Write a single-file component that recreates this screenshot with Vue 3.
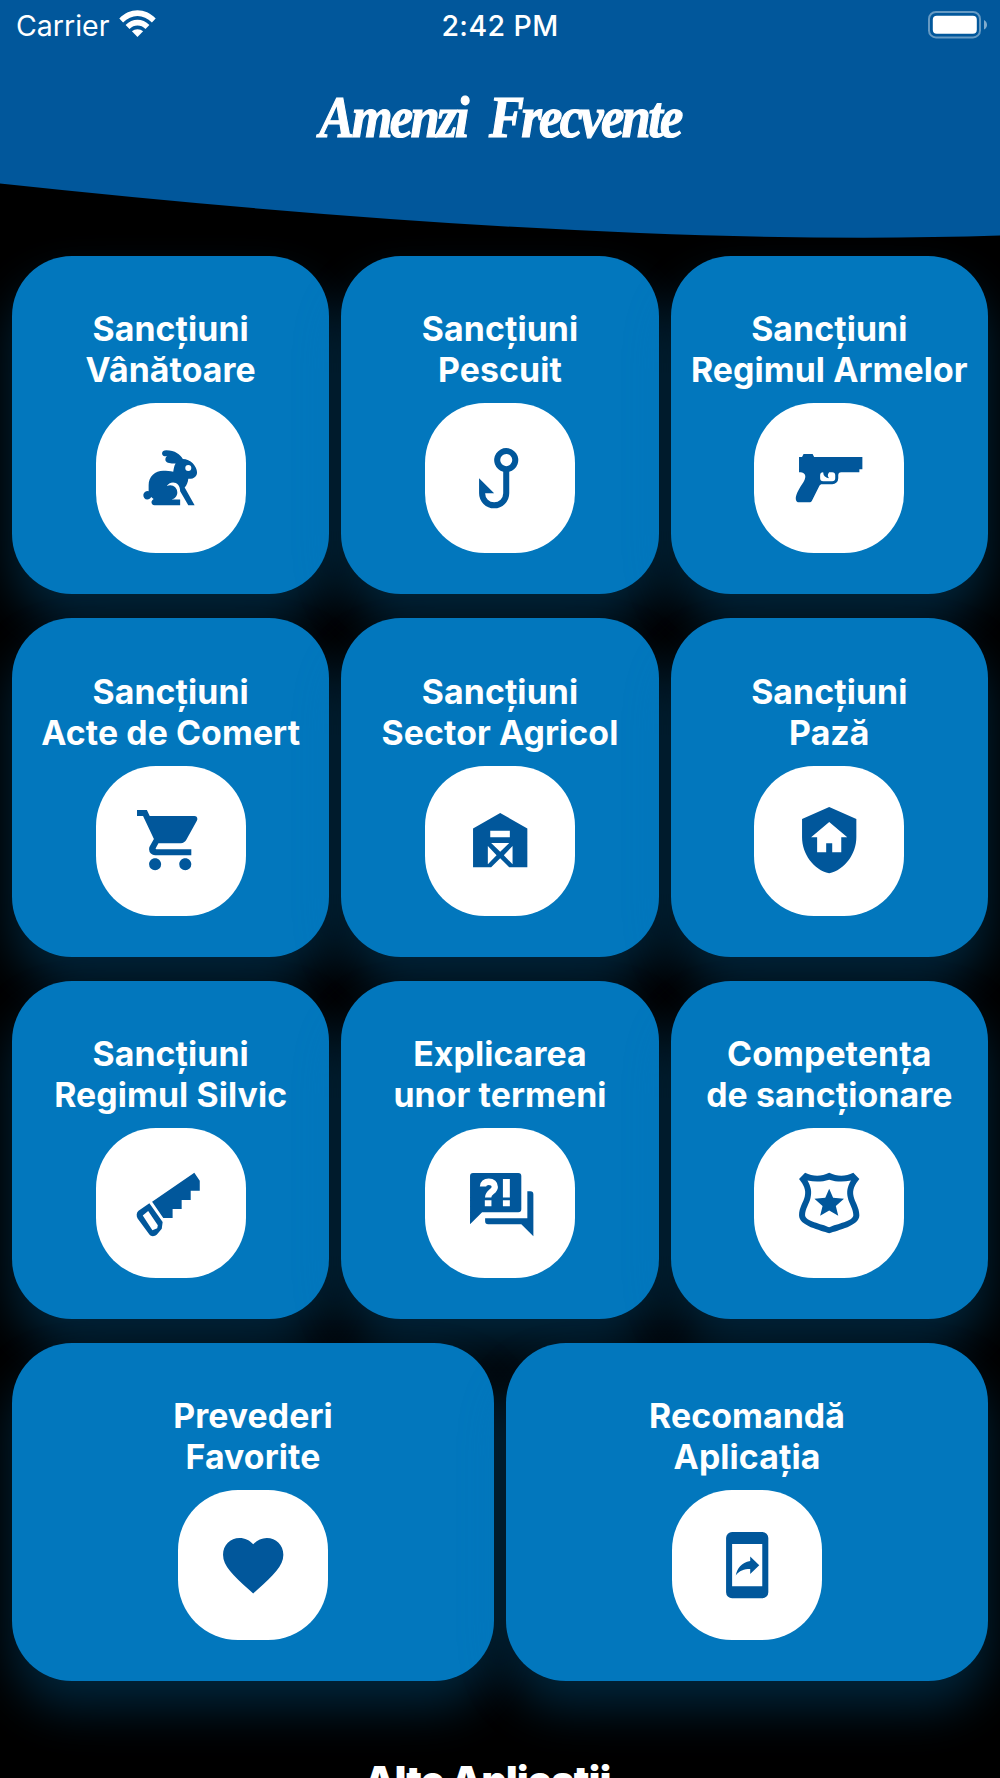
<script setup>
import { ref } from "vue";

const title = ref(["Amenzi", "Frecvente"]);

const icons = {
  rabbit:
    "M18 21L15.3 16.3C15.3 14.5 14.25 13.42 12.95 13.42C12.05 13.42 11.27 13.92 10.87 14.66C11.2 14.47 11.59 14.37 12 14.37C13.3 14.37 14.36 15.43 14.36 16.73C14.36 18.04 13.31 19.1 12 19.1H15.3V21H6.8C6.1 21 5.8 20.5 5.8 20C5.8 19.5 6.1 19.2 6.5 18.9C6.2 18.75 5.95 18.5 5.7 18.25C5.45 18.75 5 19.05 4.4 19.05A1.4 1.4 0 1 1 4.85 16.3V14.3C4.85 11.5 7 9.55 9.7 9.55C10.8 9.55 12 9.7 13 9.85C13.2 9 13.2 8 13.8 7.1C12.6 7.3 10.4 7 10.4 5.9C10.4 5.3 10.6 4.9 11 4.7C10.1 4.8 9.3 4.6 9.3 3.8C9.3 3 9.9 2.75 10.7 2.75C13.6 2.75 15.3 4.2 16.2 5.6C18.7 5.6 20.9 8 20.9 10C20.9 11.4 19.9 12.3 18 12.2C17.9 13.2 17.5 14.5 16.8 15.1L20.1 21H18M18 7.6A1 1 0 1 0 18 9.6A1 1 0 1 0 18 7.6Z",
  hook: "M5 12V17A5 5 0 0 0 15 17V9.87A4 4 0 1 0 13 9.87V17A3 3 0 0 1 7 17H10L5 12M14 4A2 2 0 1 1 12 6A2 2 0 0 1 14 4Z",
  pistol:
    "M7,5H23V9H22V10H16A1,1 0 0,0 15,11V12A2,2 0 0,1 13,14H9.62C9.24,14 8.89,14.22 8.72,14.56L6.27,19.45C6.1,19.79 5.76,20 5.38,20H2C2,20 -1,20 3,14C3,14 6,10 2,10V5H3L3.5,4H6.5L7,5M14,12V11A1,1 0 0,0 13,10H12C12,10 11,11 12,12A2,2 0 0,1 10,10A1,1 0 0,0 9,11V12A1,1 0 0,0 10,13H13A1,1 0 0,0 14,12Z",
  cart: "M17,18C15.89,18 15,18.89 15,20A2,2 0 0,0 17,22A2,2 0 0,0 19,20C19,18.89 18.1,18 17,18M1,2V4H3L6.6,11.59L5.24,14.04C5.09,14.32 5,14.65 5,15A2,2 0 0,0 7,17H19V15H7.42A0.25,0.25 0 0,1 7.17,14.75C7.17,14.7 7.18,14.66 7.2,14.63L8.1,13H15.55C16.3,13 16.96,12.58 17.3,11.97L20.88,5.5C20.95,5.34 21,5.17 21,5A1,1 0 0,0 20,4H5.21L4.27,2M7,18C5.89,18 5,18.89 5,20A2,2 0 0,0 7,22A2,2 0 0,0 9,20C9,18.89 8.1,18 7,18Z",
  barn: "M12 3L3 8.1V21H9L12 18L15 21H21V8.1L12 3M8.7 8.9H15.2V11H8.7V8.9M9 12.9H15L12 15.8L9 12.9M7.9 13.9L10.8 17L7.9 20V13.9M16.1 13.9V20L13.2 17L16.1 13.9Z",
  shieldHome:
    "M11,13H13V16H16V11H18L12,6L6,11H8V16H11V13M12,1L21,5V11C21,16.55 17.16,21.74 12,23C6.84,21.74 3,16.55 3,11V5L12,1Z",
  saw: "M20 1.9L21.8 4.6V7.9H18.8V10.9H15.8V13.9H12.8V16.9H9.7L6 11.5L20 1.9M5.1 12L9.5 18.2L9.2 20.5L7.6 22.4C6.8 23.1 5.7 23.1 5.1 22.4L1.2 17.1C0.7 16.2 0.8 15.1 1.5 14.5L5.1 12M4.7 14.6L2.9 16.1L6.1 21L7.7 20.3L7.9 19.3L4.7 14.6Z",
  questions:
    "M3 2H18A1 1 0 0 1 19 3V14A1 1 0 0 1 18 15H6L2 19V3A1 1 0 0 1 3 2M12.9 4V10.1H15.2V4H12.9M12.9 11V13H15.2V11H12.9M6.9 11V13H9.1V11H6.9M21 8H22A1 1 0 0 1 23 9V23L19 19H8A1 1 0 0 1 7 18V17H21V8Z",
  badge:
    "M4 1.9C6.7 3.2 9.3 3.2 12 1.9C14.7 3.2 17.3 3.2 20 1.9L22 4C20.4 6 19.6 7.6 20.1 9.8C20.5 11.6 22 13.5 22 16C22 19.6 14.9 20.9 12 22C9.1 20.9 2 19.6 2 16C2 13.5 3.5 11.6 3.9 9.8C4.4 7.6 3.6 6 2 4L4 1.9M4.8 4.5C6 6.6 6.3 8.2 5.8 10.3C5.4 12.2 4 14 4 16C4 18 9.5 18.8 12 20C14.5 18.8 20 18 20 16C20 14 18.6 12.2 18.2 10.3C17.7 8.2 18 6.6 19.2 4.5C16.7 5 14.4 5 12 4.2C9.6 5 7.3 5 4.8 4.5M12 7.2L13.3 10.2L16.9 10.5L14.2 12.9L15 16.2L12 14.4L9 16.2L9.8 12.9L7.1 10.5L10.7 10.2L12 7.2Z",
  heart:
    "M12,21.35L10.55,20.03C5.4,15.36 2,12.27 2,8.5C2,5.41 4.42,3 7.5,3C9.24,3 10.91,3.81 12,5.08C13.09,3.81 14.76,3 16.5,3C19.58,3 22,5.41 22,8.5C22,12.27 18.6,15.36 13.45,20.03L12,21.35Z",
  share:
    "M7 1H17A2 2 0 0 1 19 3V21A2 2 0 0 1 17 23H7A2 2 0 0 1 5 21V3A2 2 0 0 1 7 1M7 5V19H17V5H7M13 9.1L16 12L13 14.9V13.3C10.9 13.3 9.4 13.9 8.2 15.4C8.7 13.1 10 11.1 13 10.6V9.1Z",
};

const rows = ref([
  [
    { id: 1, line1: "Sancțiuni", line2: "Vânătoare", icon: "rabbit" },
    { id: 2, line1: "Sancțiuni", line2: "Pescuit", icon: "hook" },
    { id: 3, line1: "Sancțiuni", line2: "Regimul Armelor", icon: "pistol" },
  ],
  [
    { id: 4, line1: "Sancțiuni", line2: "Acte de Comert", icon: "cart" },
    { id: 5, line1: "Sancțiuni", line2: "Sector Agricol", icon: "barn" },
    { id: 6, line1: "Sancțiuni", line2: "Pază", icon: "shieldHome" },
  ],
  [
    { id: 7, line1: "Sancțiuni", line2: "Regimul Silvic", icon: "saw" },
    { id: 8, line1: "Explicarea", line2: "unor termeni", icon: "questions" },
    { id: 9, line1: "Competența", line2: "de sancționare", icon: "badge" },
  ],
  [
    { id: 10, line1: "Prevederi", line2: "Favorite", icon: "heart" },
    { id: 11, line1: "Recomandă", line2: "Aplicația", icon: "share" },
  ],
]);
</script>

<template>
  <div class="screen">
    <header class="header">
      <svg class="wave" width="1000" height="240" viewBox="0 0 1000 240">
        <path d="M0 0V183.5Q605 248.5 1000 235.6V0Z" fill="#01579b" />
      </svg>
      <div class="status-bar">
        <div class="carrier">
          <span>Carrier</span>
          <svg class="wifi" width="37" height="28" viewBox="0 0 37 28">
            <path
              d="M0.3 8.6C10.5 -2.5 26.5 -2.5 36.7 8.6L32.9 12.5C24.6 3.8 12.4 3.8 4.1 12.5Z"
            />
            <path
              d="M6.6 15C13.4 8 23.6 8 30.4 15L26.5 18.9C22 14.4 15 14.4 10.5 18.9Z"
            />
            <path d="M12.9 21.3C16 18.4 21 18.4 24.1 21.3L18.5 27Z" />
          </svg>
        </div>
        <span class="time">2:42 PM</span>
        <div class="battery">
          <svg width="60" height="28" viewBox="0 0 60 28">
            <rect
              x="1"
              y="1"
              width="51"
              height="25.4"
              rx="7"
              fill="none"
              stroke="#fff"
              stroke-opacity="0.4"
              stroke-width="2"
            />
            <rect x="4.8" y="4.7" width="44" height="18" rx="4" fill="#fff" />
            <path
              d="M56 9C60 11 60 16.6 56 18.6Z"
              fill="#fff"
              fill-opacity="0.5"
            />
          </svg>
        </div>
      </div>
      <h1 class="title">
        <span v-for="word in title" :key="word">{{ word }}</span>
      </h1>
    </header>

    <main class="menu">
      <div v-for="(row, index) in rows" :key="index" class="row">
        <button v-for="item in row" :key="item.id" class="card">
          <span class="card-text">{{ item.line1 }}<br />{{ item.line2 }}</span>
          <span class="tile">
            <svg class="icon" viewBox="0 0 24 24">
              <path :d="icons[item.icon]" fill-rule="evenodd" />
              <path
                v-if="item.icon === 'questions'"
                class="mark"
                d="M6.3 6.5C6.3 5.4 7 4.9 8.2 4.9C9.5 4.9 10.2 5.6 10.2 6.6C10.2 8.1 8 8.3 8 10.1"
              />
            </svg>
          </span>
        </button>
      </div>
    </main>

    <h2 class="more">Alte Aplicații</h2>
  </div>
</template>

<style>
body {
  margin: 0;
  background-color: #000;
}
</style>

<style scoped>
.screen {
  width: 1000px;
  height: 1778px;
  overflow: hidden;
  background-color: #000;
  color: #fff;
  font-family: Inter, "Liberation Sans", sans-serif;
}

.header {
  position: relative;
  height: 256px;
}

.wave {
  position: absolute;
  top: 0;
  left: 0;
}

.status-bar {
  position: relative;
  display: grid;
  grid-template-columns: 1fr auto 1fr;
  align-items: center;
  height: 50px;
  padding: 0 12px;
  font-size: 28.5px;
}

.carrier {
  display: flex;
  align-items: center;
  gap: 10px;
  padding-left: 4px;
}

.wifi {
  fill: #fff;
  margin-bottom: 3px;
}

.time {
  font-weight: 550;
  letter-spacing: 0.4px;
}

.battery {
  display: flex;
  justify-content: flex-end;
}

.title {
  position: relative;
  display: flex;
  justify-content: center;
  gap: 25px;
  margin: 33px 0 0;
  font-family: "Liberation Serif", serif;
  font-size: 59px;
  font-style: italic;
  font-weight: bold;
  line-height: 68px;
  letter-spacing: -3px;
  transform: scaleX(0.89);
  -webkit-text-stroke: 1.2px #fff;
}

.menu {
  display: flex;
  flex-direction: column;
  gap: 24.15px;
  padding: 0 12.08px;
}

.row {
  display: flex;
  gap: 12.08px;
}

.card {
  display: flex;
  flex: 1 1 0;
  flex-direction: column;
  align-items: center;
  gap: 13px;
  height: 338.2px;
  padding: 52.2px 0 0;
  border: none;
  border-radius: 60px;
  background-color: #0277bd;
  box-shadow: 0 27px 48px rgba(2, 119, 189, 0.31);
  color: #fff;
  font-family: inherit;
  cursor: pointer;
}

.card-text {
  font-size: 33.8px;
  font-weight: 700;
  line-height: 41px;
  letter-spacing: 0.1px;
  white-space: nowrap;
}

.tile {
  display: flex;
  align-items: center;
  justify-content: center;
  width: 150px;
  height: 150px;
  border-radius: 60px;
  background-color: #fff;
}

.icon {
  width: 72.4px;
  height: 72.4px;
  fill: #01579b;
}

.mark {
  fill: none;
  stroke: #fff;
  stroke-width: 2.1;
}

.more {
  margin: 69px 0 0;
  padding-right: 25px;
  font-size: 39px;
  font-weight: 900;
  line-height: 60px;
  letter-spacing: -0.6px;
  text-align: center;
}
</style>
